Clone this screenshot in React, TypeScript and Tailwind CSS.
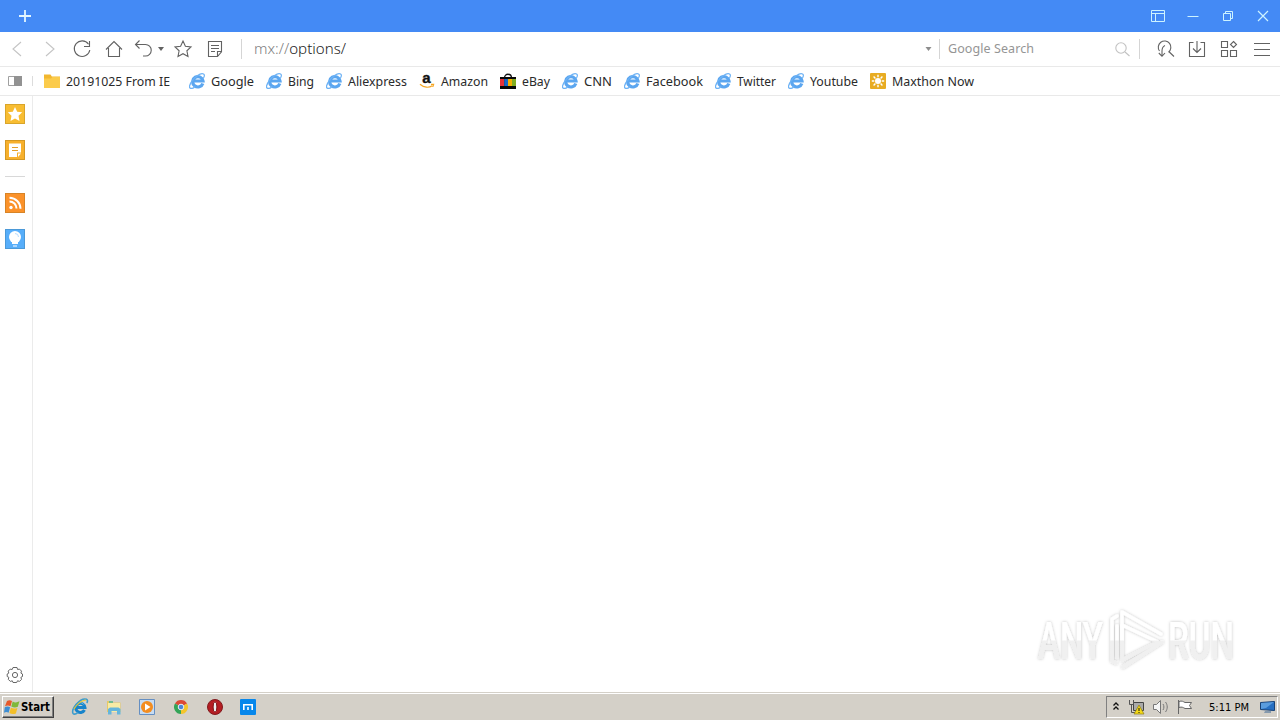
import type { ReactNode } from 'react';

const IeIcon = () => (
  <svg width="16" height="16" viewBox="0 0 16 16" fill="none">
    <path d="M13.8 10.4A5.2 5.2 0 1 1 14 8H5.2" stroke="#5ba6f0" strokeWidth="3.2" />
    <path d="M3.2 8.2C5.5 4 11.5-.6 14.6 1c1.2.8.7 2.6-.1 4" stroke="#6db2f5" strokeWidth="1.2" />
    <path d="M2.8 8.5C.6 11.5-.2 14.4 1.2 15.2c1.2.6 3.5-.4 5-1.8" stroke="#6db2f5" strokeWidth="1.3" />
  </svg>
);

const FolderIcon = () => (
  <svg width="16" height="16" viewBox="0 0 16 16">
    <path d="M0 1.5h6.5l1.3 2H16V15H0z" fill="#f2b72f" />
    <path d="M0 5.5h7l1.5-1.5H16v11H0z" fill="#fbcb4b" />
  </svg>
);

const AmazonIcon = () => (
  <svg className="overflow-visible" width="16" height="16" viewBox="0 0 16 16" fill="none">
    <text x="3.3" y="9.6" fontFamily="Liberation Sans, sans-serif" fontWeight="bold" fontSize="15" fill="#111" stroke="#111" strokeWidth=".4">a</text>
    <path d="M1 11.3c4 3.6 9 3.7 12.2 1.4M12 11.4l2.600-.1-.8 2.600" stroke="#f5a623" strokeWidth="1.2" />
  </svg>
);

const EbayIcon = () => (
  <svg width="16" height="16" viewBox="0 0 16 16">
    <path d="M4.500 5c0-5 7-5 7 0" fill="none" stroke="#111" strokeWidth="1.3" />
    <path d="M0 4h16v12H0z" fill="#080808" />
    <path d="M0 6h4.200v7H0z" fill="#e53238" />
    <path d="M4.200 6h3.800v7H4.200z" fill="#1468c7" />
    <path d="M8 6h4v7H8z" fill="#f5af02" />
    <path d="M12 6h4v7h-4z" fill="#80ad21" />
  </svg>
);

const MaxthonNowIcon = () => (
  <svg width="16" height="16" viewBox="0 0 16 16">
    <rect width="16" height="16" rx="1" fill="#e8ac22" />
    <circle cx="8" cy="8" r="3" fill="#fff" />
    <path d="M8 1.800v2.500M8 11.700v2.500M1.800 8h2.500M11.700 8h2.500M3.600 3.600l1.800 1.800M10.600 10.600l1.800 1.800M3.600 12.400l1.800-1.800M10.600 5.400l1.800-1.800" stroke="#fff" strokeWidth="1.4" />
  </svg>
);

const bookmarks = [
  { label: '20191025 From IE', icon: <FolderIcon />, box: 'w-[145px]', text: 104 },
  { label: 'Google', icon: <IeIcon />, box: 'w-[77px]', text: 43 },
  { label: 'Bing', icon: <IeIcon />, box: 'w-[60px]', text: 26 },
  { label: 'Aliexpress', icon: <IeIcon />, box: 'w-[93px]', text: 59 },
  { label: 'Amazon', icon: <AmazonIcon />, box: 'w-[81px]', text: 47 },
  { label: 'eBay', icon: <EbayIcon />, box: 'w-[62px]', text: 28 },
  { label: 'CNN', icon: <IeIcon />, box: 'w-[62px]', text: 28 },
  { label: 'Facebook', icon: <IeIcon />, box: 'w-[91px]', text: 57 },
  { label: 'Twitter', icon: <IeIcon />, box: 'w-[73px]', text: 39 },
  { label: 'Youtube', icon: <IeIcon />, box: 'w-[82px]', text: 48 },
  { label: 'Maxthon Now', icon: <MaxthonNowIcon />, box: 'w-[110px]', text: 82 },
];

function ToolButton({ children, width = 'w-8' }: { children: ReactNode; width?: string }) {
  return (
    <button className={`flex h-full shrink-0 items-center justify-center ${width}`}>
      <svg width="20" height="20" viewBox="0 0 20 20" fill="none" stroke="#626262" strokeWidth="1.1">
        {children}
      </svg>
    </button>
  );
}

function TitleBar() {
  return (
    <div className="flex h-8 items-center justify-between bg-[#448af5] pr-[9px] pl-[19px]">
      <svg width="12" height="12" viewBox="0 0 12 12" stroke="#e4f7ff" strokeWidth="1.8">
        <path d="M6 0v12M0 6h12" />
      </svg>
      <div className="flex items-center gap-[19px]">
        <svg width="16" height="14" viewBox="0 0 16 14" fill="none" stroke="#cdf3ff">
          <path d="M1.5 1.5h13v11h-13zM1.5 4.5h13M5.5 4.5v8" />
        </svg>
        <svg width="16" height="14" viewBox="0 0 16 14" fill="none" stroke="#cdf3ff">
          <path d="M2.5 7.5h11" />
        </svg>
        <svg width="16" height="14" viewBox="0 0 16 14" fill="none" stroke="#cdf3ff">
          <path d="M3.5 4.5h7v7h-7zM5.5 4.5v-2h7v7h-2" />
        </svg>
        <svg width="16" height="14" viewBox="0 0 16 14" fill="none" stroke="#cdf3ff" strokeWidth="1.2">
          <path d="M3 2l10 10M13 2L3 12" />
        </svg>
      </div>
    </div>
  );
}

function ToolBar() {
  return (
    <div className="flex h-[35px] items-center border-b border-[#e9e9e9] bg-white pl-[2px]">
      <ToolButton><path d="M13 3L5 10l8 7" stroke="#c4c4c4" /></ToolButton>
      <ToolButton><path d="M6 3l8 7-8 7" stroke="#c4c4c4" /></ToolButton>
      <ToolButton>
        <path d="M16.500 5.200A7.800 7.800 0 1 0 17.800 11M17.500 2v5.500H12" />
      </ToolButton>
      <ToolButton>
        <path d="M2 10.500L10 2.500l8 8M4.500 9v8.500h11V9" />
      </ToolButton>
      <ToolButton width="w-[27px]">
        <path d="M5.500 1.500L1.500 5.500 5.500 9.500M2 5.500h9.500a5.500 5.500 0 0 1 0 11.500H9" />
      </ToolButton>
      <svg className="mr-[3px] ml-px shrink-0" width="6" height="4" viewBox="0 0 6 4"><path d="M0 0h6L3 4z" fill="#626262" /></svg>
      <ToolButton>
        <path d="M10 2l2.400 5.200 5.600.7-4.100 3.900 1.100 5.700-5-2.800-5 2.800 1.100-5.700L2 7.900l5.600-.7z" />
      </ToolButton>
      <ToolButton>
        <path d="M3.500 2.500h13v10.300l-4 4.700h-9zM16.500 12.500h-4v5M6 6.500h8M6 9.500h8M6 12.500h4" />
      </ToolButton>
      <div className="ml-[10px] h-5 w-px bg-[#d5d5d5]" />
      <div className="ml-[12px] flex-1 whitespace-nowrap">
        <svg className="block" width="96" height="24">
          <text y="17" textLength="92" fontSize="15" fontWeight="300" className="fill-[#222] font-['Noto_Sans',sans-serif]" lengthAdjust="spacingAndGlyphs">
            <tspan fill="#808080">mx://</tspan>options/
          </text>
        </svg>
      </div>
      <svg className="mr-[7px]" width="7" height="4" viewBox="0 0 7 4"><path d="M.5 0h6L3.500 4z" fill="#8d8d8d" /></svg>
      <div className="h-5 w-px bg-[#d5d5d5]" />
      <div className="flex w-[199px] items-center justify-between pr-[9px] pl-2">
        <svg className="block" width="90" height="20">
          <text y="14" textLength="86" fontSize="12.500" className="fill-[#959595] font-['Noto_Sans',sans-serif]">Google Search</text>
        </svg>
        <svg width="15" height="15" viewBox="0 0 15 15" fill="none" stroke="#c2c2c2" strokeWidth="1.1">
          <circle cx="6" cy="6" r="5.200" /><path d="M10 10l4.500 4" />
        </svg>
      </div>
      <div className="h-5 w-px bg-[#d5d5d5]" />
      <div className="ml-[9px] flex h-full w-[131px]">
        <ToolButton>
          <path d="M4.500 12A6.300 6.300 0 1 1 13.500 13.200M13.800 12.500L19 17.500M10 6.500C7.500 7.500 7 9.500 7 12v5M3.800 14L7 17.300l3-3.300" />
        </ToolButton>
        <ToolButton>
          <path d="M6.500 3.500h-4v14h15v-14h-4M10 2v11.500M6 9.500l4 4 4-4" />
        </ToolButton>
        <ToolButton>
          <path d="M2.500 2.500h6v6h-6zM2.500 11.500h6v6h-6zM11.500 11.500h6v6h-6zM14.500 2.500L17.500 5.500 14.500 8.500 11.500 5.500z" />
        </ToolButton>
        <ToolButton width="w-[34px]">
          <path d="M2 4.500h16M2 10.500h16M2 16.500h16" />
        </ToolButton>
      </div>
    </div>
  );
}

function BookmarksBar() {
  return (
    <div className="flex h-[29px] items-center border-b border-[#e9e9e9] bg-white pl-2">
      <svg className="shrink-0" width="14" height="10" viewBox="0 0 14 10" fill="none" stroke="#a0a0a0">
        <path d="M.5.5h13v9H.5z" /><path d="M6 0h8v10H6z" fill="#929292" stroke="none" />
      </svg>
      <div className="mr-[11px] ml-[10px] h-[10px] w-px bg-[#dcdcdc]" />
      {bookmarks.map((item) => (
        <a key={item.label} className={`flex shrink-0 items-center gap-[6px] ${item.box}`}>
          <span className="shrink-0">{item.icon}</span>
          <svg className="block shrink-0 overflow-visible" width={item.text} height="18">
            <text y="14" textLength={item.text} fontSize="12.500" lengthAdjust="spacingAndGlyphs" className="fill-[#2a2a2a] font-['Noto_Sans',sans-serif]">{item.label}</text>
          </svg>
        </a>
      ))}
    </div>
  );
}

function SideBar() {
  return (
    <div className="flex w-[33px] flex-col border-r border-[#ebebeb] bg-white pt-2 pb-2 pl-[5px]">
      <svg width="20" height="20" viewBox="0 0 20 20">
        <path d="M0 0h20v20H0z" fill="#d9a52a" /><path d="M1 1h18v18H1z" fill="#f8bd32" />
        <path d="M10 3l2.200 4.700 5 .6-3.700 3.500 1 5.200-4.500-2.600L5.500 17l1-5.200L2.800 8.300l5-.6z" fill="#fff" />
      </svg>
      <svg className="mt-4" width="20" height="20" viewBox="0 0 20 20">
        <path d="M0 0h20v20H0z" fill="#d49823" /><path d="M1 1h18v18H1z" fill="#f7b02c" />
        <path d="M4 3.500h12v9h-4v4.500H4zM13 13.500h3L13 17z" fill="#fff" />
        <path d="M7 7.500h6M7 10.500h6" stroke="#e5a02a" />
      </svg>
      <div className="mt-4 h-px w-5 bg-[#d8d8d8]" />
      <svg className="mt-4" width="20" height="20" viewBox="0 0 20 20">
        <path d="M0 0h20v20H0z" fill="#d78427" /><path d="M1 1h18v18H1z" fill="#fb922a" />
        <circle cx="6" cy="14.500" r="1.700" fill="#fff" />
        <path d="M4.500 8.500a7 7 0 0 1 7 7M4.500 4.700A11 11 0 0 1 15.500 15.700" fill="none" stroke="#fff" strokeWidth="2" />
      </svg>
      <svg className="mt-4" width="20" height="20" viewBox="0 0 20 20">
        <path d="M0 0h20v20H0z" fill="#4b99d8" /><path d="M1 1h18v18H1z" fill="#57aefa" />
        <circle cx="10" cy="8" r="6" fill="#fff" />
        <path d="M7 12h6v3H7zM8 16.500h4v1H8z" fill="#fff" />
        <path d="M10 4.500A3.500 3.500 0 0 1 13.500 8" fill="none" stroke="#b5dcff" />
      </svg>
      <svg className="mt-auto" width="20" height="18" viewBox="0 0 20 18" fill="none" stroke="#666">
        <path d="M8 1.500h4l.6 2 1.900-.4 2 2-.6 2 1.600.9v2.500l-1.600.8.600 2.100-2 2-2-.6-.8 1.700H8l-.7-1.700-2 .6-2-2 .5-2.100-1.600-.8V8l1.600-.9-.6-2 2-2 2 .4z" />
        <circle cx="10" cy="9" r="2.600" />
      </svg>
    </div>
  );
}

function Watermark() {
  return (
    <svg className="absolute right-[40px] bottom-[14px] overflow-visible" width="210" height="76" viewBox="1030 603 210 76">
      <defs>
        <linearGradient id="fade" x1="0" y1="623" x2="0" y2="660" gradientUnits="userSpaceOnUse">
          <stop offset=".48" stopColor="#fff" />
          <stop offset=".52" stopColor="#f0f0f0" />
        </linearGradient>
        <filter id="shade" x="-10%" y="-15%" width="120%" height="130%">
          <feDropShadow dx="0" dy="0" stdDeviation="1.400" floodColor="#000" floodOpacity=".26" />
        </filter>
      </defs>
      <g filter="url(#shade)">
        <g fill="url(#fade)" className="font-[Roboto,sans-serif]" fontSize="51" fontWeight="500">
          <text x="1038" y="660" textLength="65" lengthAdjust="spacingAndGlyphs">ANY</text>
          <text x="1168" y="660" textLength="66" lengthAdjust="spacingAndGlyphs">RUN</text>
        </g>
        <g fill="none" stroke="url(#fade)" strokeWidth="3.500" strokeLinejoin="round" strokeLinecap="round">
          <path d="M1122 643v-30l39 22" />
          <path d="M1117 617l-5 3v42l4 2" />
          <path d="M1117 627v31" />
          <path d="M1122 626l36 17-36 18z" />
          <path d="M1162 643l-39 25" />
        </g>
      </g>
    </svg>
  );
}

const launchers = [
  <svg key="ie" width="18" height="18" viewBox="0 0 18 18" fill="none">
    <path d="M13.500 12A4.600 4.600 0 1 1 14 9.500H5.500" stroke="#1784cb" strokeWidth="3" />
    <path d="M5.500 5.800C8 4.200 11 4.200 12.800 6.500" stroke="#72ccef" />
    <path d="M2 15.500C0 11 9-.500 15.500 1.300c1.500.7 1 2.500.3 3.700M2 15.500c1 1 3.500.2 5-1" stroke="#3d9ccc" strokeWidth="1.600" />
    <path d="M3 11C6 6 11 2 15 2" stroke="#ecc82d" strokeWidth="1.200" />
  </svg>,
  <svg key="explorer" width="18" height="18" viewBox="0 0 18 18">
    <path d="M2 3h5l1 1.500h7.500V14H2z" fill="#e6c968" />
    <path d="M3 5h12v9H3z" fill="#f8eba5" /><path d="M4 3h4v2H4z" fill="#72bc91" />
    <path d="M3 16.500V11l2-1.500h8.500l2 1.500v5.500H12V13H6.500v3.500z" fill="#65b5dc" />
  </svg>,
  <svg key="player" width="18" height="18" viewBox="0 0 18 18">
    <path d="M1.500 1.500h15v15h-15z" fill="#c7dcf2" stroke="#658fc2" />
    <circle cx="9" cy="9" r="6" fill="#f38d20" /><path d="M7 5.500v7l5.500-3.500z" fill="#fff" />
  </svg>,
  <svg key="chrome" width="18" height="18" viewBox="0 0 18 18" fill="none" strokeWidth="4">
    <path d="M4.700 6.500A5 5 0 0 1 13.300 6.500" stroke="#dc4936" />
    <path d="M13.300 6.500A5 5 0 0 1 9 14" stroke="#f4c52b" />
    <path d="M9 14A5 5 0 0 1 4.700 6.500" stroke="#33a457" />
    <circle cx="9" cy="9" r="2.800" fill="#4d86d8" stroke="#e9edf0" strokeWidth="1" />
  </svg>,
  <svg key="opera" width="18" height="18" viewBox="0 0 18 18">
    <circle cx="9" cy="9" r="7.500" fill="#b51d22" stroke="#811a1d" />
    <ellipse cx="9" cy="9" rx="1.900" ry="5.200" fill="#eee" stroke="#7e1114" />
  </svg>,
  <svg key="maxthon" width="18" height="18" viewBox="0 0 18 18">
    <rect x="1" y="1" width="16" height="16" rx="1" fill="#0787eb" />
    <path d="M4.800 12V6.800h8.400V12M9 9v3" fill="none" stroke="#fff" strokeWidth="1.600" />
  </svg>,
];

function TaskBar() {
  return (
    <div className="flex h-7 items-center border-t border-[#d4d0c8] bg-[#d4d0c8] pl-[2px] shadow-[inset_0_1px_0_#fff]">
      <button className="flex h-[22px] w-[52px] items-center border border-t-white border-r-[#404040] border-b-[#404040] border-l-white pl-px shadow-[inset_-1px_-1px_0_#808080]">
        <svg width="16" height="16" viewBox="0 0 16 16">
          <path d="M3 2c2-1.300 3.500-1 5 0L6.500 7.300C4.800 6.300 3 6.300 1 7.300z" fill="#e7592b" />
          <path d="M8.700 2.500c2 1.300 4 1.300 6.800-.2l-1.700 5.500c-2.100 1-4 1-6.500-.300z" fill="#7fb83b" />
          <path d="M.8 8.200c2-1 3.700-.8 5.300 0l-1.500 5.500c-1.500-1-3-1-4.600 0z" fill="#3e8ed3" />
          <path d="M6.900 8.700c2 1 4 1.100 6.500.200l-1.500 5.500c-2.500 1-4.600.8-6.500-.300z" fill="#f3bf29" />
        </svg>
        <svg className="ml-px block overflow-visible" width="29" height="16">
          <text y="12" textLength="29" fontSize="11.500" fontWeight="700" lengthAdjust="spacingAndGlyphs" className="font-['DejaVu_Sans',sans-serif]">Start</text>
        </svg>
      </button>
      <div className="ml-[17px] flex gap-[15.700px]">{launchers}</div>
      <div className="mr-[2px] ml-auto flex h-[22px] w-[172px] items-center border border-t-[#808080] border-r-white border-b-white border-l-[#808080] pl-[5px]">
        <svg className="shrink-0" width="8" height="10" viewBox="0 0 8 10" fill="none" stroke="#111" strokeWidth="1.300">
          <path d="M1.500 3.500l2.500-2.500 2.500 2.500M1.500 7.500l2.500-2.500 2.500 2.500" />
        </svg>
        <svg className="ml-2 shrink-0" width="18" height="16" viewBox="0 0 18 16">
          <path d="M5.500 3.500h10v8h-10z" fill="#aaa" stroke="#444" />
          <path d="M1.500 1v4.500h4V1M3.500 5.500v8h5" fill="none" stroke="#555" />
          <path d="M11 6l5 9H6z" fill="#f4d916" stroke="#8c7c17" strokeWidth=".7" />
          <path d="M11 9v3M11 13v1" stroke="#111" />
        </svg>
        <svg className="ml-[6px] shrink-0" width="17" height="16" viewBox="0 0 17 16" fill="none" stroke="#777">
          <path d="M1.500 5.500h3l4-4v13l-4-4h-3z" fill="#f5f5f5" /><path d="M11 5c1.200 2 1.200 4 0 6M13.500 3c2.300 3 2.300 7 0 10" />
        </svg>
        <svg className="ml-[7px] shrink-0" width="17" height="16" viewBox="0 0 17 16" fill="#fff" stroke="#666">
          <path d="M2.500 1v14" /><path d="M3 2.500c3-1 4 0 6 1h6.500l-2 3 2 3H9c-2-1-3-2-6-1z" />
        </svg>
        <svg className="ml-[16px] block shrink-0 overflow-visible" width="42" height="16">
          <text y="12" textLength="40" fontSize="10.500" lengthAdjust="spacingAndGlyphs" className="font-['DejaVu_Sans',sans-serif]">5:11 PM</text>
        </svg>
        <svg className="ml-[8px] shrink-0" width="17" height="16" viewBox="0 0 17 16">
          <path d="M1.500 3.500l14-1v9l-14-1z" fill="#266fc2" stroke="#174176" />
          <path d="M2 4l13-1-8 6-5 1z" fill="#5a9cdd" /><path d="M6 12h6v2H5z" fill="#8599ad" />
        </svg>
      </div>
    </div>
  );
}

function App() {
  return (
    <div className="flex h-screen w-full flex-col overflow-hidden bg-white text-black">
      <TitleBar />
      <ToolBar />
      <BookmarksBar />
      <div className="flex min-h-0 flex-1">
        <SideBar />
        <main className="relative flex-1 bg-white">
          <Watermark />
        </main>
      </div>
      <TaskBar />
    </div>
  );
}

export default App;
